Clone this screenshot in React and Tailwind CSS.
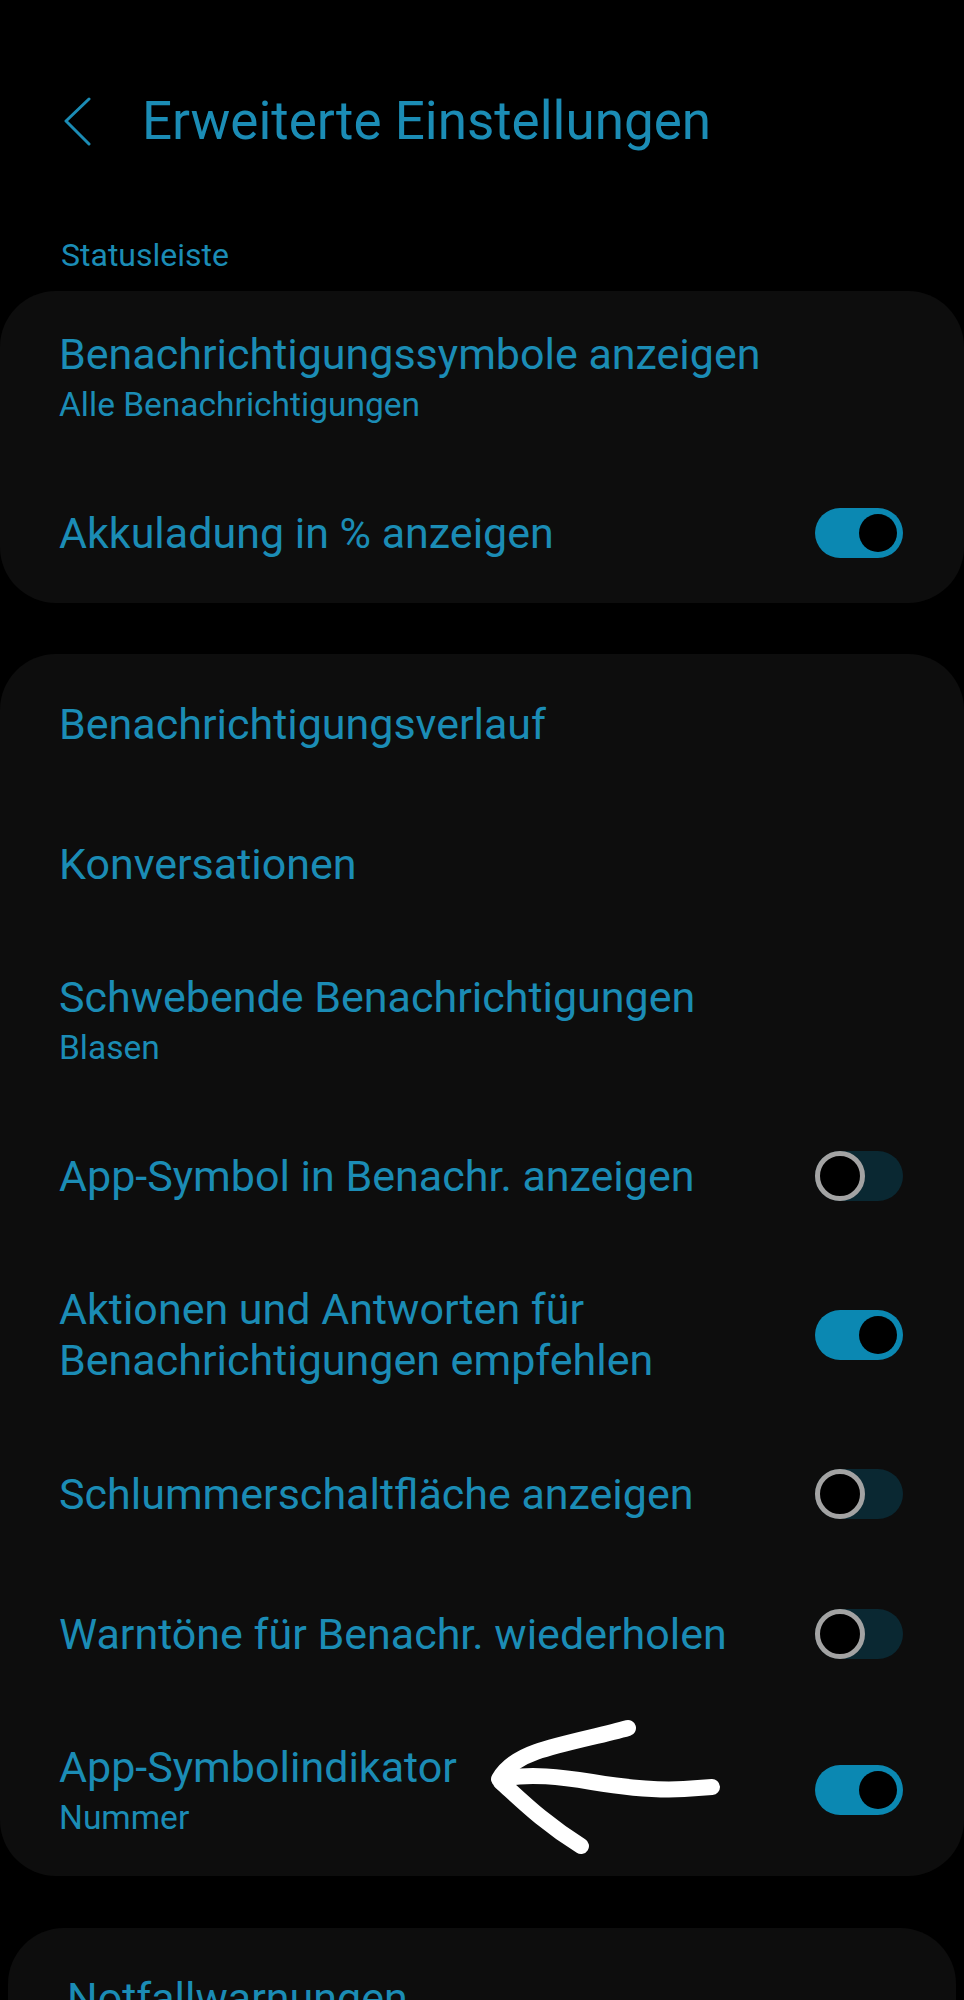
import React from 'react'

const statusRows = [
  { title: 'Benachrichtigungssymbole anzeigen', sub: 'Alle Benachrichtigungen' },
  { title: 'Akkuladung in % anzeigen', toggle: true },
]

const notifRows = [
  { title: 'Benachrichtigungsverlauf' },
  { title: 'Konversationen' },
  { title: 'Schwebende Benachrichtigungen', sub: 'Blasen' },
  { title: 'App-Symbol in Benachr. anzeigen', toggle: false },
  { title: 'Aktionen und Antworten für\nBenachrichtigungen empfehlen', toggle: true },
  { title: 'Schlummerschaltfläche anzeigen', toggle: false },
  { title: 'Warntöne für Benachr. wiederholen', toggle: false },
  { title: 'App-Symbolindikator', sub: 'Nummer', toggle: true, arrow: true },
]

// One UI style switch
const Toggle = ({ on }) =>
  on ? (
    <div className="relative h-[50px] w-[88px] shrink-0 rounded-full bg-[#0b88b2]">
      <div className="absolute right-[6px] top-[6px] h-[38px] w-[38px] rounded-full bg-black" />
    </div>
  ) : (
    <div className="relative h-[50px] w-[88px] shrink-0 rounded-full bg-[#0a2832]">
      <div className="absolute left-0 top-0 h-[50px] w-[50px] rounded-full border-[5px] border-[#a3a3a3] bg-black" />
    </div>
  )

// hand drawn arrow pointing at the row
const Arrow = () => (
  <svg
    className="pointer-events-none absolute left-[470px] top-[-5px]"
    width="270"
    height="170"
    viewBox="0 0 270 170"
    fill="none"
    stroke="#ffffff"
    strokeWidth="16"
    strokeLinecap="round"
    strokeLinejoin="round"
  >
    <path d="M158 29 C130 37 92 44 66 53 C46 60 35 70 29 80" />
    <path d="M30 80 C60 74 92 78 122 83 C152 88 182 92 214 90 L242 88" />
    <path d="M31 83 C52 102 74 124 111 147" />
  </svg>
)

const Row = ({ title, sub, toggle, arrow }) => (
  <div className="relative flex min-h-[140px] items-center justify-between gap-6 py-[38px] pl-[59px] pr-[61px]">
    <div>
      <p className="whitespace-pre-line text-[43px] leading-[51px]">{title}</p>
      {sub && <p className="mt-[5px] text-[33.5px] leading-[40px]">{sub}</p>}
    </div>
    {toggle !== undefined && <Toggle on={toggle} />}
    {arrow && <Arrow />}
  </div>
)

const App = () => {
  return (
    <div className="min-h-[2000px] overflow-hidden bg-black font-['Roboto',sans-serif] text-[#1b8cb5]">
      {/* Header */}
      <div className="flex items-center pl-[64px] pt-[89px]">
        <svg width="28" height="50" viewBox="0 0 28 50" fill="none" stroke="#1b8cb5" strokeWidth="3" strokeLinecap="round" strokeLinejoin="round">
          <path d="M25 3 L2 25 L25 48" />
        </svg>
        <h1 className="ml-[50px] text-[53px] leading-[64px]">Erweiterte Einstellungen</h1>
      </div>

      <p className="mt-[82px] pl-[61px] text-[32px] leading-[40px]">Statusleiste</p>

      <div className="mt-[16px] rounded-[56px] bg-[#0d0d0d]">
        {statusRows.map((row, i) => (
          <Row key={i} {...row} />
        ))}
      </div>

      <div className="mt-[51px] rounded-[56px] bg-[#0d0d0d]">
        {notifRows.map((row, i) => (
          <Row key={i} {...row} />
        ))}
      </div>

      <div className="mx-[8px] mt-[52px] rounded-[56px] bg-[#0d0d0d] pb-[40px]">
        <Row title="Notfallwarnungen" />
      </div>
    </div>
  )
}

export default App
